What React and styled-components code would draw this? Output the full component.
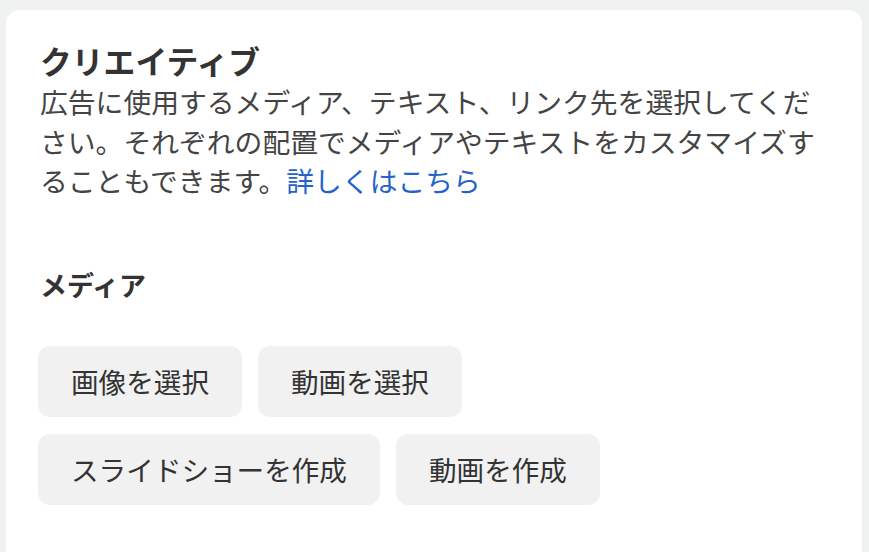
import React from 'react';
import styled, { createGlobalStyle } from 'styled-components';

const GlobalStyle = createGlobalStyle`
  html, body {
    margin: 0;
    padding: 0;
    background: #f0f2f2;
  }
  body {
    font-family: "Noto Sans CJK JP", "Noto Sans", sans-serif;
  }
`;

const Page = styled.div`
  height: 552px;
  overflow: hidden;
  padding: 10px 7px 0 6px;
  box-sizing: border-box;
`;

const Card = styled.section`
  background: #ffffff;
  border-radius: 14px 14px 0 0;
  padding: 32px 30px 60px 34px;
  min-height: 600px;
  box-sizing: border-box;
`;

const Title = styled.h2`
  margin: 0;
  font-size: 31.8px;
  line-height: 36px;
  font-weight: 700;
  color: #333333;
`;

const Description = styled.p`
  margin: 4px 0 0 0;
  font-size: 27.8px;
  line-height: 39.5px;
  color: #444444;
`;

const Link = styled.a`
  color: #2463cc;
  text-decoration: none;
`;

const SectionTitle = styled.h3`
  margin: 66px 0 0 0;
  font-size: 27px;
  line-height: 36px;
  font-weight: 700;
  color: #333333;
`;

const ButtonGroup = styled.div`
  display: flex;
  flex-wrap: wrap;
  gap: 17px 16px;
  max-width: 680px;
  margin-top: 43px;
  margin-left: -2px;
`;

const Button = styled.button`
  height: 71px;
  padding: 0 33px;
  border: none;
  border-radius: 12px;
  background: #f1f1f1;
  color: #333333;
  font-family: inherit;
  font-size: 27.6px;
  cursor: pointer;
`;

const mediaActions = ['画像を選択', '動画を選択', 'スライドショーを作成', '動画を作成'];

export default function App() {
  return (
    <>
      <GlobalStyle />
      <Page>
        <Card>
          <Title>クリエイティブ</Title>
          <Description>
            広告に使用するメディア、テキスト、リンク先を選択してください。それぞれの配置でメディアやテキストをカスタマイズすることもできます。
            <Link href="#">詳しくはこちら</Link>
          </Description>
          <SectionTitle>メディア</SectionTitle>
          <ButtonGroup>
            {mediaActions.map((label) => (
              <Button key={label}>{label}</Button>
            ))}
          </ButtonGroup>
        </Card>
      </Page>
    </>
  );
}
